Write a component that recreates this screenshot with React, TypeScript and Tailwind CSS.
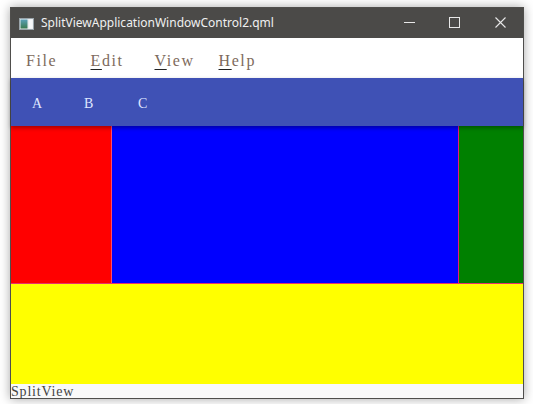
import React from "react";

const serif = { fontFamily: '"Liberation Serif", "DejaVu Serif", serif' };

function TitleIcon() {
  return (
    <svg width="15" height="12" viewBox="0 0 15 12">
      <defs>
        <linearGradient id="g1" x1="0" y1="0" x2="0" y2="1">
          <stop offset="0" stopColor="#5aa0b8" />
          <stop offset="1" stopColor="#3a7a50" />
        </linearGradient>
      </defs>
      <rect x="0.5" y="0.5" width="14" height="11" fill="#e8ecef" stroke="#9aa4aa" />
      <rect x="1.5" y="1.5" width="7" height="9" fill="url(#g1)" />
      <rect x="10" y="1.5" width="3.5" height="9" fill="#f6f8fa" />
    </svg>
  );
}

export default function App() {
  return (
    <div className="w-[533px] h-[404px] bg-white overflow-hidden pt-[7px] pl-[10px]">
      <div className="w-[514px] h-[392px] border border-[#4f4e4c] flex flex-col shadow-[0_0_10px_rgba(0,0,0,0.35)]">
        {/* Title bar */}
        <div className="h-[30px] bg-[#4b4a48] flex items-center relative">
          <div className="ml-[8px] mt-[1px] flex items-center">
            <TitleIcon />
          </div>
          <div
            className="ml-[7px] text-[12px] text-[#f0f0f0] leading-none"
            style={{ fontFamily: '"Noto Sans", "Open Sans", sans-serif' }}
          >
            SplitViewApplicationWindowControl2.qml
          </div>
          <div className="absolute left-[393px] top-[14px] w-[11px] h-px bg-[#e8e8e8]" />
          <div className="absolute left-[438px] top-[9px] w-[11px] h-[11px] border border-[#e8e8e8]" />
          <svg className="absolute left-[484px] top-[9px]" width="11" height="11" viewBox="0 0 11 11">
            <path d="M0.5 0.5 L10.5 10.5 M10.5 0.5 L0.5 10.5" stroke="#e8e8e8" strokeWidth="1.1" />
          </svg>
        </div>
        {/* Menu bar */}
        <div
          className="h-[40px] bg-white flex items-center pl-[15px] pt-[6px] text-[16px] text-[#7d6a5c] tracking-[1.6px] leading-none"
          style={serif}
        >
          <span className="w-[64.5px]">File</span>
          <span className="w-[64px]"><span className="underline decoration-[#222] underline-offset-[3px]">E</span>dit</span>
          <span className="w-[64px]"><span className="underline decoration-[#222] underline-offset-[3px]">V</span>iew</span>
          <span className="w-[64px]"><span className="underline decoration-[#222] underline-offset-[3px]">H</span>elp</span>
        </div>
        {/* Toolbar */}
        <div
          className="h-[48px] bg-[#3f51b5] flex items-center pl-[21px] pt-[3px] text-[14px] text-[#dfe6ff] relative z-10 shadow-[0_2px_4px_rgba(0,0,0,0.35)] leading-none"
          style={serif}
        >
          <span className="w-[52px]">A</span>
          <span className="w-[54px]">B</span>
          <span>C</span>
        </div>
        {/* Split content */}
        <div className="h-[157px] flex">
          <div className="w-[100px] bg-[#ff0000]" />
          <div className="w-px bg-[#ff4a6a]" />
          <div className="w-[346px] bg-[#0000ff]" />
          <div className="w-px bg-[#e0207a]" />
          <div className="flex-1 bg-[#008000]" />
        </div>
        <div className="h-px bg-[#e8306e]" />
        <div className="h-[100px] bg-[#ffff00]" />
        {/* Status */}
        <div
          className="h-[14px] bg-[#f9f9f9] flex items-end text-[14px] text-[#444] leading-none tracking-[0.8px]"
          style={serif}
        >
          <span className="translate-y-[1px]">SplitView</span>
        </div>
      </div>
    </div>
  );
}
